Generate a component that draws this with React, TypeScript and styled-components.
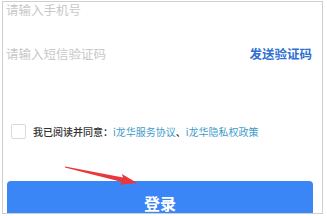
import React from "react";
import styled, { createGlobalStyle } from "styled-components";

const GlobalStyle = createGlobalStyle`
    html, body {
        margin: 0;
        padding: 0;
        background: #fff;
        font-family: "Noto Sans CJK SC", "Noto Sans", sans-serif;
    }
`;

export default function App() {
    return (
        <Page>
            <GlobalStyle />
            <Frame>
                <PhoneRow>
                    <Placeholder>请输入手机号</Placeholder>
                </PhoneRow>
                <CodeRow>
                    <Placeholder>请输入短信验证码</Placeholder>
                    <SendCode>发送验证码</SendCode>
                </CodeRow>
                <AgreeRow>
                    <CheckBox />
                    <AgreeText>
                        我已阅读并同意：<Link>i龙华服务协议</Link>、<Link>i龙华隐私权政策</Link>
                    </AgreeText>
                </AgreeRow>
                <LoginBtn>登录</LoginBtn>
            </Frame>
            <Arrow width="327" height="216" viewBox="0 0 327 216">
                <g transform="translate(65 167) rotate(12.5)">
                    <polygon
                        points="0,-0.6 59,-2.2 57,-5.5 74,0 57,5.5 59,2.2 0,0.6"
                        fill="#e9383a"
                    />
                </g>
            </Arrow>
        </Page>
    );
}

const Page = styled.div`
    position: relative;
    width: 327px;
    height: 216px;
    overflow: hidden;
`;

const Frame = styled.div`
    margin: 1px 0 0 2px;
    width: 319px;
    height: 211px;
    border: 1px solid #cfcfcf;
    overflow: hidden;
`;

const PhoneRow = styled.div`
    height: 16px;
    display: flex;
    align-items: center;
    padding-left: 3px;
`;

const CodeRow = styled.div`
    height: 44px;
    margin-top: 14px;
    display: flex;
    align-items: center;
    justify-content: space-between;
    padding: 0 10px 0 3px;
`;

const Placeholder = styled.span`
    font-size: 12.5px;
    color: #c8c8c8;
    line-height: 16px;
`;

const SendCode = styled.span`
    font-size: 12.5px;
    font-weight: 700;
    color: #2d6fd2;
    line-height: 16px;
`;

const AgreeRow = styled.div`
    height: 15px;
    margin-top: 48px;
    display: flex;
    align-items: center;
    padding-left: 8px;
`;

const CheckBox = styled.span`
    width: 13px;
    height: 13px;
    border: 1px solid #dadada;
    border-radius: 2px;
    margin-right: 7px;
    flex-shrink: 0;
`;

const AgreeText = styled.span`
    font-size: 10px;
    font-weight: 500;
    color: #333;
    white-space: nowrap;
`;

const Link = styled.span`
    font-weight: 400;
    color: #3f9bcb;
`;

const LoginBtn = styled.div`
    margin: 42px 0 0 4px;
    width: 306px;
    height: 44px;
    border-radius: 4px 4px 0 0;
    background: #3a86f6;
    color: #fff;
    font-size: 16px;
    font-weight: 700;
    display: flex;
    align-items: center;
    justify-content: center;
`;

const Arrow = styled.svg`
    position: absolute;
    left: 0;
    top: 0;
    pointer-events: none;
`;
